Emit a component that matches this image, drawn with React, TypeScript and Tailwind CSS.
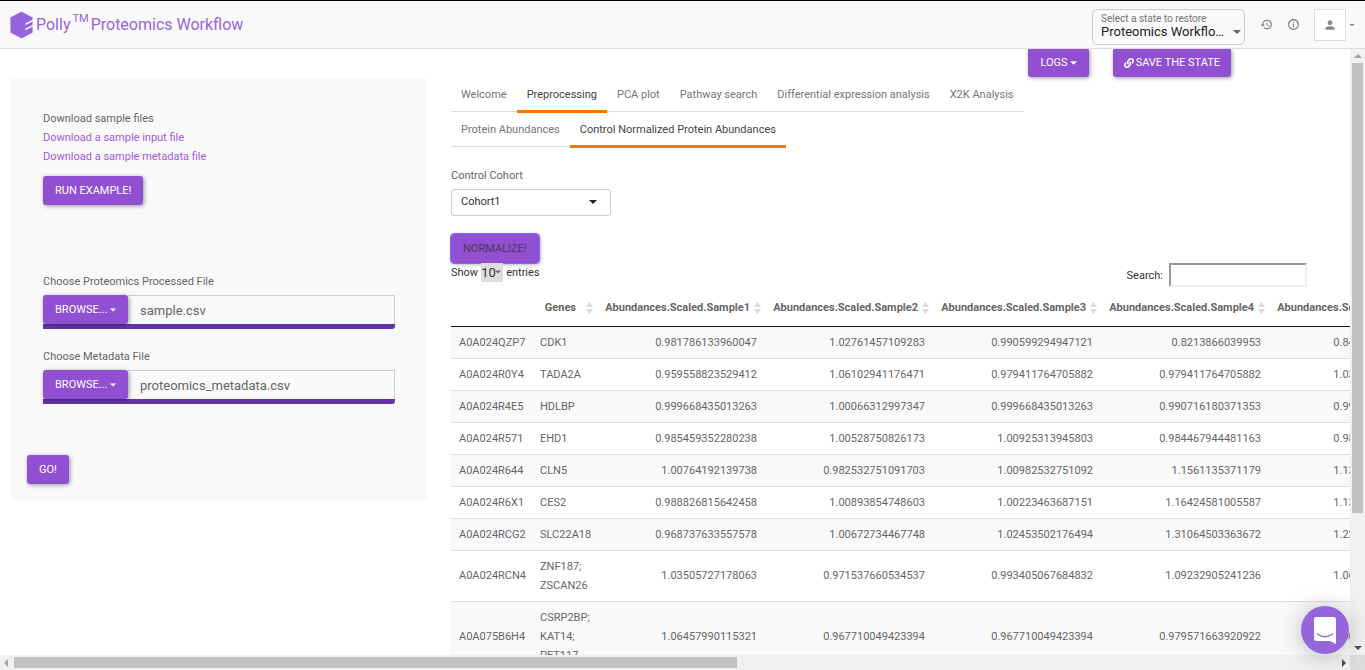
import { useState } from 'react';
import { MdHistory, MdInfoOutline, MdPerson, MdArrowDropDown } from 'react-icons/md';
import { FaLink } from 'react-icons/fa';

const tabs = [
  'Welcome',
  'Preprocessing',
  'PCA plot',
  'Pathway search',
  'Differential expression analysis',
  'X2K Analysis',
];

const subTabs = ['Protein Abundances', 'Control Normalized Protein Abundances'];

const samples = [1, 2, 3, 4, 5];

const rows = [
  { id: 'A0A024QZP7', genes: ['CDK1'], values: ['0.981786133960047', '1.02761457109283', '0.990599294947121', '0.8213866039953', '0.84606345475911'] },
  { id: 'A0A024R0Y4', genes: ['TADA2A'], values: ['0.959558823529412', '1.06102941176471', '0.979411764705882', '0.979411764705882', '1.03897058823529'] },
  { id: 'A0A024R4E5', genes: ['HDLBP'], values: ['0.999668435013263', '1.00066312997347', '0.999668435013263', '0.990716180371353', '0.99668435013262'] },
  { id: 'A0A024R571', genes: ['EHD1'], values: ['0.985459352280238', '1.00528750826173', '1.00925313945803', '0.984467944481163', '0.98545935228023'] },
  { id: 'A0A024R644', genes: ['CLN5'], values: ['1.00764192139738', '0.982532751091703', '1.00982532751092', '1.1561135371179', '1.13209606986899'] },
  { id: 'A0A024R6X1', genes: ['CES2'], values: ['0.988826815642458', '1.00893854748603', '1.00223463687151', '1.16424581005587', '1.13072625698324'] },
  { id: 'A0A024RCG2', genes: ['SLC22A18'], values: ['0.968737633557578', '1.00672734467748', '1.02453502176494', '1.31064503363672', '1.22754254056193'] },
  { id: 'A0A024RCN4', genes: ['ZNF187;', 'ZSCAN26'], values: ['1.03505727178063', '0.971537660534537', '0.993405067684832', '1.09232905241236', '1.06525515442559'] },
  { id: 'A0A075B6H4', genes: ['CSRP2BP;', 'KAT14;', 'PET117'], values: ['1.06457990115321', '0.967710049423394', '0.967710049423394', '0.979571663920922', '1.00622734761122'] },
];

const Logo = () => (
  <svg width="23" height="28" viewBox="0 0 23 28" aria-hidden="true">
    <path
      d="M11.5 1.200L22 6.700V21.300L11.500 26.800L1 21.300V6.700Z"
      fill="#9565dc"
      stroke="#9565dc"
      strokeWidth="1.200"
      strokeLinejoin="round"
    />
    <path d="M16 13L23 9.500M16 18.200L23 14.700" stroke="#f9f9f9" strokeWidth="1.500" strokeLinecap="round" />
  </svg>
);

const Caret = ({ className }: { className: string }) => (
  <svg width="8" height="4" viewBox="0 0 8 4" fill="currentColor" className={className} aria-hidden="true">
    <path d="M0 0h8L4 4z" />
  </svg>
);

const SortIcon = () => (
  <svg width="7" height="12" viewBox="0 0 7 12" fill="#d9d9d9" aria-hidden="true">
    <path d="M3.500 0L7 5H0zM3.500 12L0 7h7z" />
  </svg>
);

const buttonClass =
  'flex h-[29px] items-center rounded-[3px] bg-[#9150d1] uppercase shadow-[1px_1px_4px_rgba(0,0,0,0.4)]';

const FileField = ({ id, label, file }: { id: string; label: string; file: string }) => (
  <div className="mx-4 mb-[18px]">
    <label htmlFor={id} className="mb-1 block">
      {label}
    </label>
    <div className="flex h-[34px] rounded-br-[3px] border-b-[5px] border-[#6633a8]">
      <button type="button" className={`${buttonClass} w-[85px] shrink-0 justify-between px-3 text-white`}>
        Browse...
        <Caret className="w-[6px]" />
      </button>
      <input
        id={id}
        type="text"
        readOnly
        defaultValue={file}
        className="min-w-0 flex-1 border-t border-r border-[#ccc] bg-transparent px-3 text-[13px] text-[#666] outline-none"
      />
    </div>
  </div>
);

const TabBar = ({ items, active, onSelect }: { items: string[]; active: string; onSelect: (item: string) => void }) => (
  <div role="tablist" className="flex w-fit whitespace-nowrap">
    {items.map((item) => (
      <button
        key={item}
        type="button"
        role="tab"
        aria-selected={item == active}
        onClick={() => onSelect(item)}
        className={
          item == active
            ? 'h-[35px] border-b-[3px] border-[#ff7300] px-[10px] text-[#444]'
            : 'h-[34px] border-b border-[#ddd] px-[10px] text-[#757575]'
        }
      >
        {item}
      </button>
    ))}
  </div>
);

const Header = () => (
  <header className="flex h-[49px] shrink-0 items-center justify-between border-t border-b border-t-black border-b-[#ddd] bg-[#f9f9f9] pr-[7px] pl-[10px]">
    <a href="#" className="flex items-center text-[16px] text-[#9565dc]">
      <Logo />
      <span className="mb-px ml-[3px]">Polly</span>
      <sup className="mx-[2px] text-[11px]">TM</sup>
      <span className="mb-px">Proteomics Workflow</span>
    </a>
    <div className="flex items-center">
      <div className="relative mt-1 h-9 w-[153px] rounded-[5px] border border-[#ccc] px-2 pt-[3px]">
        <label htmlFor="state" className="block text-[10px] leading-3 text-[#757575]">
          Select a state to restore
        </label>
        <select id="state" className="block w-full appearance-none bg-transparent text-[13px] leading-[14px] text-[#222] outline-none">
          <option>Proteomics Workflo…</option>
        </select>
        <Caret className="pointer-events-none absolute right-[3px] bottom-[10px] text-[#666]" />
      </div>
      <button type="button" aria-label="History" className="ml-[15px] text-[#777]">
        <MdHistory size={13} />
      </button>
      <button type="button" aria-label="Info" className="ml-[14px] text-[#777]">
        <MdInfoOutline size={13} />
      </button>
      <button type="button" aria-label="Account" className="ml-[14px] flex items-center text-[#888]">
        <span className="flex size-8 items-center justify-center border border-[#ddd] bg-white">
          <MdPerson size={14} />
        </span>
        <MdArrowDropDown size={12} />
      </button>
    </div>
  </header>
);

const SidePanel = () => (
  <aside className="w-[416px] shrink-0 self-start bg-[#f9f9f9] p-4">
    <div className="mt-[15px] mb-[67px] ml-4 flex flex-col items-start">
      <span>Download sample files</span>
      <a href="#" className="text-[#a05bdc]">
        Download a sample input file
      </a>
      <a href="#" className="text-[#a05bdc]">
        Download a sample metadata file
      </a>
      <button type="button" className={`${buttonClass} mt-[10px] px-3 text-white`}>
        Run Example!
      </button>
    </div>
    <FileField id="processed" label="Choose Proteomics Processed File" file="sample.csv" />
    <FileField id="metadata" label="Choose Metadata File" file="proteomics_metadata.csv" />
    <button type="button" className={`${buttonClass} mt-[51px] px-3 text-white`}>
      Go!
    </button>
  </aside>
);

const AbundanceTable = () => (
  <table className="w-[986px] table-fixed border-collapse">
    <colgroup>
      <col className="w-[81px]" />
      <col className="w-[65px]" />
      {samples.map((n) => (
        <col key={n} className="w-[168px]" />
      ))}
    </colgroup>
    <thead>
      <tr className="h-9 border-b border-[#111] whitespace-nowrap">
        <th></th>
        <th scope="col" className="pr-1 font-bold">
          <div className="flex items-center justify-end gap-[10px]">
            Genes
            <SortIcon />
          </div>
        </th>
        {samples.map((n) => (
          <th key={n} scope="col" className="pr-1 font-bold">
            <div className="flex items-center justify-end gap-1">
              Abundances.Scaled.Sample{n}
              <SortIcon />
            </div>
          </th>
        ))}
      </tr>
    </thead>
    <tbody>
      {rows.map((row) => (
        <tr key={row.id} className="border-b border-[#ddd] odd:bg-[#f9f9f9]">
          <td className="px-2 py-[6px]">{row.id}</td>
          <td className="px-2 py-[6px]">
            {row.genes.map((gene) => (
              <div key={gene}>{gene}</div>
            ))}
          </td>
          {row.values.map((value, i) => (
            <td key={i} className="px-2 py-[6px] text-right">
              {value}
            </td>
          ))}
        </tr>
      ))}
    </tbody>
  </table>
);

export default function App() {
  const [tab, setTab] = useState<string>('Preprocessing');
  const [subTab, setSubTab] = useState<string>('Control Normalized Protein Abundances');

  return (
    <div className="flex h-screen flex-col overflow-hidden bg-white font-['Roboto',sans-serif] text-[11px] leading-[19px] text-[#666]">
      <Header />
      <div className="flex min-h-0 flex-1">
        <main className="min-w-0 flex-1 overflow-hidden">
          <div className="-mt-px flex justify-end gap-6 pr-[119px]">
            <button type="button" className={`${buttonClass} gap-[2px] px-3 text-white`}>
              Logs
              <Caret className="w-[7px]" />
            </button>
            <button type="button" className={`${buttonClass} gap-[2px] px-[11px] text-white`}>
              <FaLink size={10} />
              Save the state
            </button>
          </div>
          <div className="mt-px flex gap-6 pl-[11px]">
            <SidePanel />
            <section className="mr-[43px] min-w-0 flex-1">
              <TabBar items={tabs} active={tab} onSelect={setTab} />
              <TabBar items={subTabs} active={subTab} onSelect={setSubTab} />
              <label htmlFor="cohort" className="mt-[18px] mb-1 block">
                Control Cohort
              </label>
              <div className="relative w-40">
                <select
                  id="cohort"
                  className="block h-[27px] w-full appearance-none rounded-[3px] border border-[#ccc] bg-white px-[9px] pb-[2px] text-[#333]"
                >
                  <option>Cohort1</option>
                </select>
                <Caret className="pointer-events-none absolute top-[11px] right-[14px] text-[#222]" />
              </div>
              <button
                type="button"
                className={`${buttonClass} mt-[18px] px-3 text-[#4a3a5c] outline outline-[#7d6cf0]`}
              >
                Normalize!
              </button>
              <div className="flex items-start justify-between text-[#333]">
                <label className="flex gap-[3px]">
                  Show
                  <span className="relative">
                    <select className="block h-[19px] w-[22px] appearance-none bg-[#ddd] text-[13px]">
                      <option>10</option>
                    </select>
                    <Caret className="pointer-events-none absolute top-[7px] right-[2px] w-[6px] text-[#666]" />
                  </span>
                  entries
                </label>
                <label className="flex items-center gap-[6px]">
                  Search:
                  <input
                    type="search"
                    className="h-6 w-[138px] border-2 border-t-[#999] border-r-[#eee] border-b-[#eee] border-l-[#999] bg-white px-1"
                  />
                </label>
              </div>
              <div className="mt-[3px]">
                <AbundanceTable />
              </div>
            </section>
          </div>
        </main>
        <div className="flex w-[15px] shrink-0 flex-col items-center justify-between bg-[#f1f1f1]">
          <div className="flex min-h-0 w-full flex-1 flex-col items-center">
            <Caret className="my-[5px] shrink-0 rotate-180 text-[#a3a3a3]" />
            <div className="h-[76%] w-[11px] bg-[#c1c1c1]"></div>
          </div>
          <Caret className="my-[5px] text-[#505050]" />
        </div>
      </div>
      <div className="flex h-[15px] shrink-0 bg-[#f1f1f1]">
        <div className="flex flex-1 items-center">
          <Caret className="mx-[2px] rotate-90 text-[#a3a3a3]" />
          <div className="ml-[2px] h-[11px] w-[54%] bg-[#c1c1c1]"></div>
        </div>
        <div className="flex items-center">
          <Caret className="mx-[2px] -rotate-90 text-[#505050]" />
        </div>
        <div className="w-[15px] bg-[#dcdcdc]"></div>
      </div>
      <button
        type="button"
        aria-label="Open chat"
        className="fixed right-4 bottom-4 flex size-12 items-center justify-center rounded-full bg-[#9565dc] shadow-[0_2px_24px_rgba(0,0,0,0.25)]"
      >
        <svg width="22" height="27" viewBox="0 0 22 27" aria-hidden="true">
          <path d="M2.500 0h17A2.500 2.500 0 0 1 22 2.500V27l-6-3H2.500A2.500 2.500 0 0 1 0 21.500V2.500A2.500 2.500 0 0 1 2.500 0z" fill="#fff" />
          <path d="M3.500 17q7.500 5.500 15 0" fill="none" stroke="#9565dc" strokeWidth="1.500" strokeLinecap="round" />
        </svg>
      </button>
    </div>
  );
}
